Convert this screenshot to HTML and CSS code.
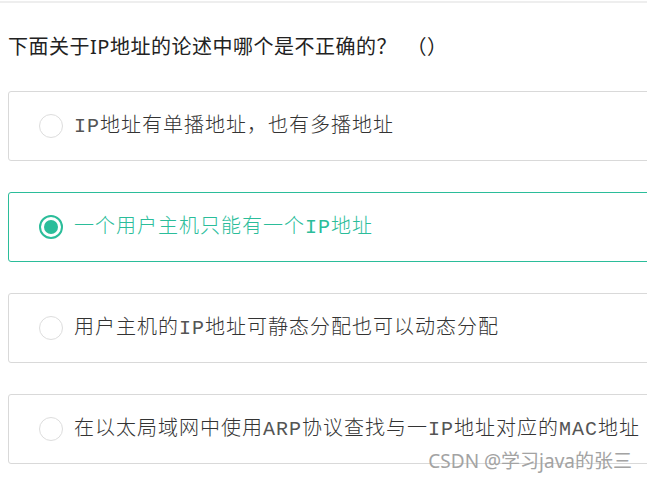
FILE: index.html
```html
<!DOCTYPE html>
<html lang="zh-CN">
<head>
<meta charset="utf-8">
<link rel="stylesheet" href="styles.css">
</head>
<body>
<div class="page">
  <div class="topline"></div>
  <div class="question">下面关于IP地址的论述中哪个是不正确的？ <span class="paren">（）</span></div>
  <div class="options">
    <div class="option">
      <span class="radio"></span>
      <span class="label"><span class="latin">IP</span>地址有单播地址，也有多播地址</span>
    </div>
    <div class="option selected">
      <span class="radio"><span class="dot"></span></span>
      <span class="label">一个用户主机只能有一个<span class="latin">IP</span>地址</span>
    </div>
    <div class="option">
      <span class="radio"></span>
      <span class="label">用户主机的<span class="latin">IP</span>地址可静态分配也可以动态分配</span>
    </div>
    <div class="option">
      <span class="radio"></span>
      <span class="label">在以太局域网中使用<span class="latin">ARP</span>协议查找与一<span class="latin">IP</span>地址对应的<span class="latin">MAC</span>地址</span>
    </div>
  </div>
  <div class="watermark">CSDN @学习java的张三</div>
</div>
</body>
</html>
```
FILE: styles.css
```css
html, body {
  margin: 0;
  padding: 0;
  overflow: hidden;
  background: #fff;
}
.page {
  position: relative;
  width: 647px;
  height: 480px;
  overflow: hidden;
}
.topline {
  margin-top: 1px;
  height: 2px;
  background: #eeeeee;
}
.question {
  margin: 29px 0 0 8px;
  height: 30px;
  line-height: 30px;
  font-family: "Noto Sans", "Noto Sans CJK SC", sans-serif;
  font-size: 20px;
  letter-spacing: 0.5px;
  color: #222;
  white-space: nowrap;
}
.paren {
  margin-left: 4px;
}
.options {
  margin-top: 29px;
  display: flex;
  flex-direction: column;
  gap: 31px;
  padding-left: 8px;
}
.option {
  box-sizing: border-box;
  width: 680px;
  height: 70px;
  border: 1px solid #d9d9d9;
  border-radius: 3px;
  display: flex;
  align-items: center;
  padding-left: 30px;
  gap: 11px;
}
.option.selected {
  border-color: #2bbd9a;
}
.radio {
  box-sizing: border-box;
  width: 24px;
  height: 24px;
  border: 1px solid #dddddd;
  border-radius: 50%;
  flex: none;
  display: flex;
  align-items: center;
  justify-content: center;
}
.option.selected .radio {
  border: 2px solid #2bbd9a;
}
.dot {
  width: 14px;
  height: 14px;
  border-radius: 50%;
  background: #2bbd9a;
}
.label {
  font-family: "Noto Sans CJK SC", sans-serif;
  font-size: 20px;
  font-weight: 300;
  letter-spacing: 1px;
  line-height: 26px;
  color: #333;
  white-space: nowrap;
  margin-top: -2px;
}
.latin {
  font-family: "Liberation Mono", monospace;
  font-weight: 400;
  color: #555;
}
.option.selected .label,
.option.selected .latin {
  color: #2bbd9a;
}
.watermark {
  position: absolute;
  right: 15px;
  top: 449px;
  font-family: "Noto Sans", "Noto Sans CJK SC", sans-serif;
  font-size: 19px;
  line-height: 24px;
  color: #a3a3a3;
  white-space: nowrap;
}
```
